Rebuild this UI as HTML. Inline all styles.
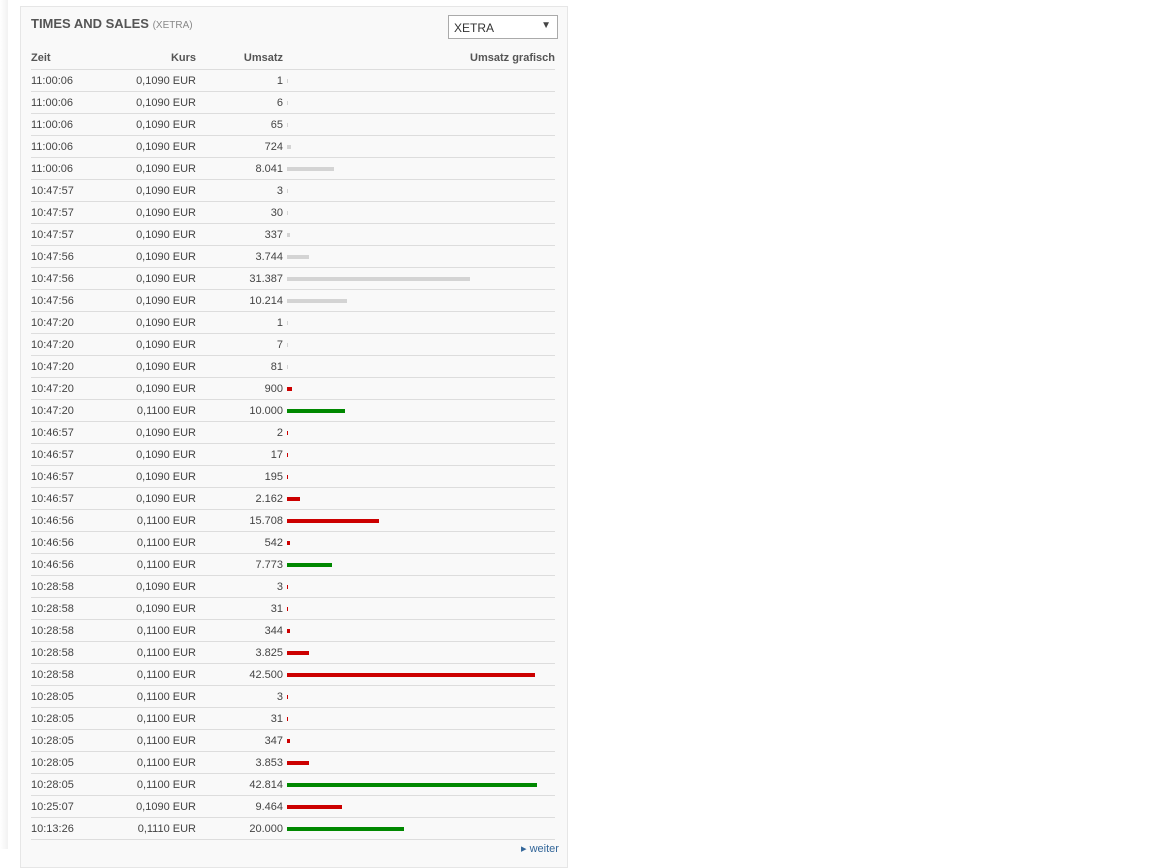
<!DOCTYPE html>
<html><head><meta charset="utf-8"><style>
body{margin:0;background:#fff;font-family:"Liberation Sans",Arial,sans-serif;width:1152px;height:849px;overflow:hidden;position:relative}
.sh{position:absolute;left:0;top:0;width:8px;height:849px;background:linear-gradient(to right,#fff,#f2f2f2)}
.panel{position:absolute;left:20px;top:6px;width:546px;height:860px;background:#f9f9f9;border:1px solid #e6e6e6}
.title{position:absolute;left:10px;top:9px;font-size:13px;font-weight:bold;color:#555}
.title span{font-size:10px;font-weight:normal;color:#888}
.sel{position:absolute;left:427px;top:8px;width:108px;height:22px;border:1px solid #aaa;background:#fff;font-size:12px;color:#333}
.sel .t{position:absolute;left:5px;top:5px}.sel .a{position:absolute;right:6px;top:4px;font-size:10px;color:#444}
table{position:absolute;left:10px;top:40px;width:524px;border-collapse:collapse;font-size:11px;color:#444}
th{font-weight:bold;color:#555;height:22px;padding:0;border-bottom:1px solid #ddd;text-align:left}
td{height:21px;padding:0;border-bottom:1px solid #ddd;white-space:nowrap}
.r{text-align:right}
.b{display:inline-block;height:4px;vertical-align:middle;margin-left:4px}
.g{background:#d4d4d4}.red{background:#c00}.gr{background:#080}
.w{position:absolute;left:500px;top:835px;font-size:11px;color:#369}
</style></head><body><div class="sh"></div>
<div class="panel"><div class="title">TIMES AND SALES <span>(XETRA)</span></div>
<div class="sel"><span class="t">XETRA</span><span class="a">▼</span></div>
<table><colgroup><col style="width:70px"><col style="width:95px"><col style="width:87px"><col></colgroup>
<tr><th>Zeit</th><th class="r">Kurs</th><th class="r">Umsatz</th><th class="r">Umsatz grafisch</th></tr>
<tbody id="tb"></tbody></table>
<div class="w">▸ weiter</div></div>
<script>
var d=[["11:00:06","0,1090","1","g"],["11:00:06","0,1090","6","g"],["11:00:06","0,1090","65","g"],["11:00:06","0,1090","724","g"],["11:00:06","0,1090","8.041","g"],["10:47:57","0,1090","3","g"],["10:47:57","0,1090","30","g"],["10:47:57","0,1090","337","g"],["10:47:56","0,1090","3.744","g"],["10:47:56","0,1090","31.387","g"],["10:47:56","0,1090","10.214","g"],["10:47:20","0,1090","1","g"],["10:47:20","0,1090","7","g"],["10:47:20","0,1090","81","g"],["10:47:20","0,1090","900","red"],["10:47:20","0,1100","10.000","gr"],["10:46:57","0,1090","2","red"],["10:46:57","0,1090","17","red"],["10:46:57","0,1090","195","red"],["10:46:57","0,1090","2.162","red"],["10:46:56","0,1100","15.708","red"],["10:46:56","0,1100","542","red"],["10:46:56","0,1100","7.773","gr"],["10:28:58","0,1090","3","red"],["10:28:58","0,1090","31","red"],["10:28:58","0,1100","344","red"],["10:28:58","0,1100","3.825","red"],["10:28:58","0,1100","42.500","red"],["10:28:05","0,1100","3","red"],["10:28:05","0,1100","31","red"],["10:28:05","0,1100","347","red"],["10:28:05","0,1100","3.853","red"],["10:28:05","0,1100","42.814","gr"],["10:25:07","0,1090","9.464","red"],["10:13:26","0,1110","20.000","gr"]];
var h="";d.forEach(function(r){var v=parseInt(r[2].replace(".",""));var w=Math.max(1,Math.round(v*250/42814));if(v<1000&&v>300)w=Math.max(w,3);
h+="<tr><td>"+r[0]+"</td><td class='r'>"+r[1]+" EUR</td><td class='r'>"+r[2]+"</td><td><span class='b "+r[3]+"' style='width:"+w+"px'></span></td></tr>";});
document.getElementById("tb").innerHTML=h;
</script></body></html>
